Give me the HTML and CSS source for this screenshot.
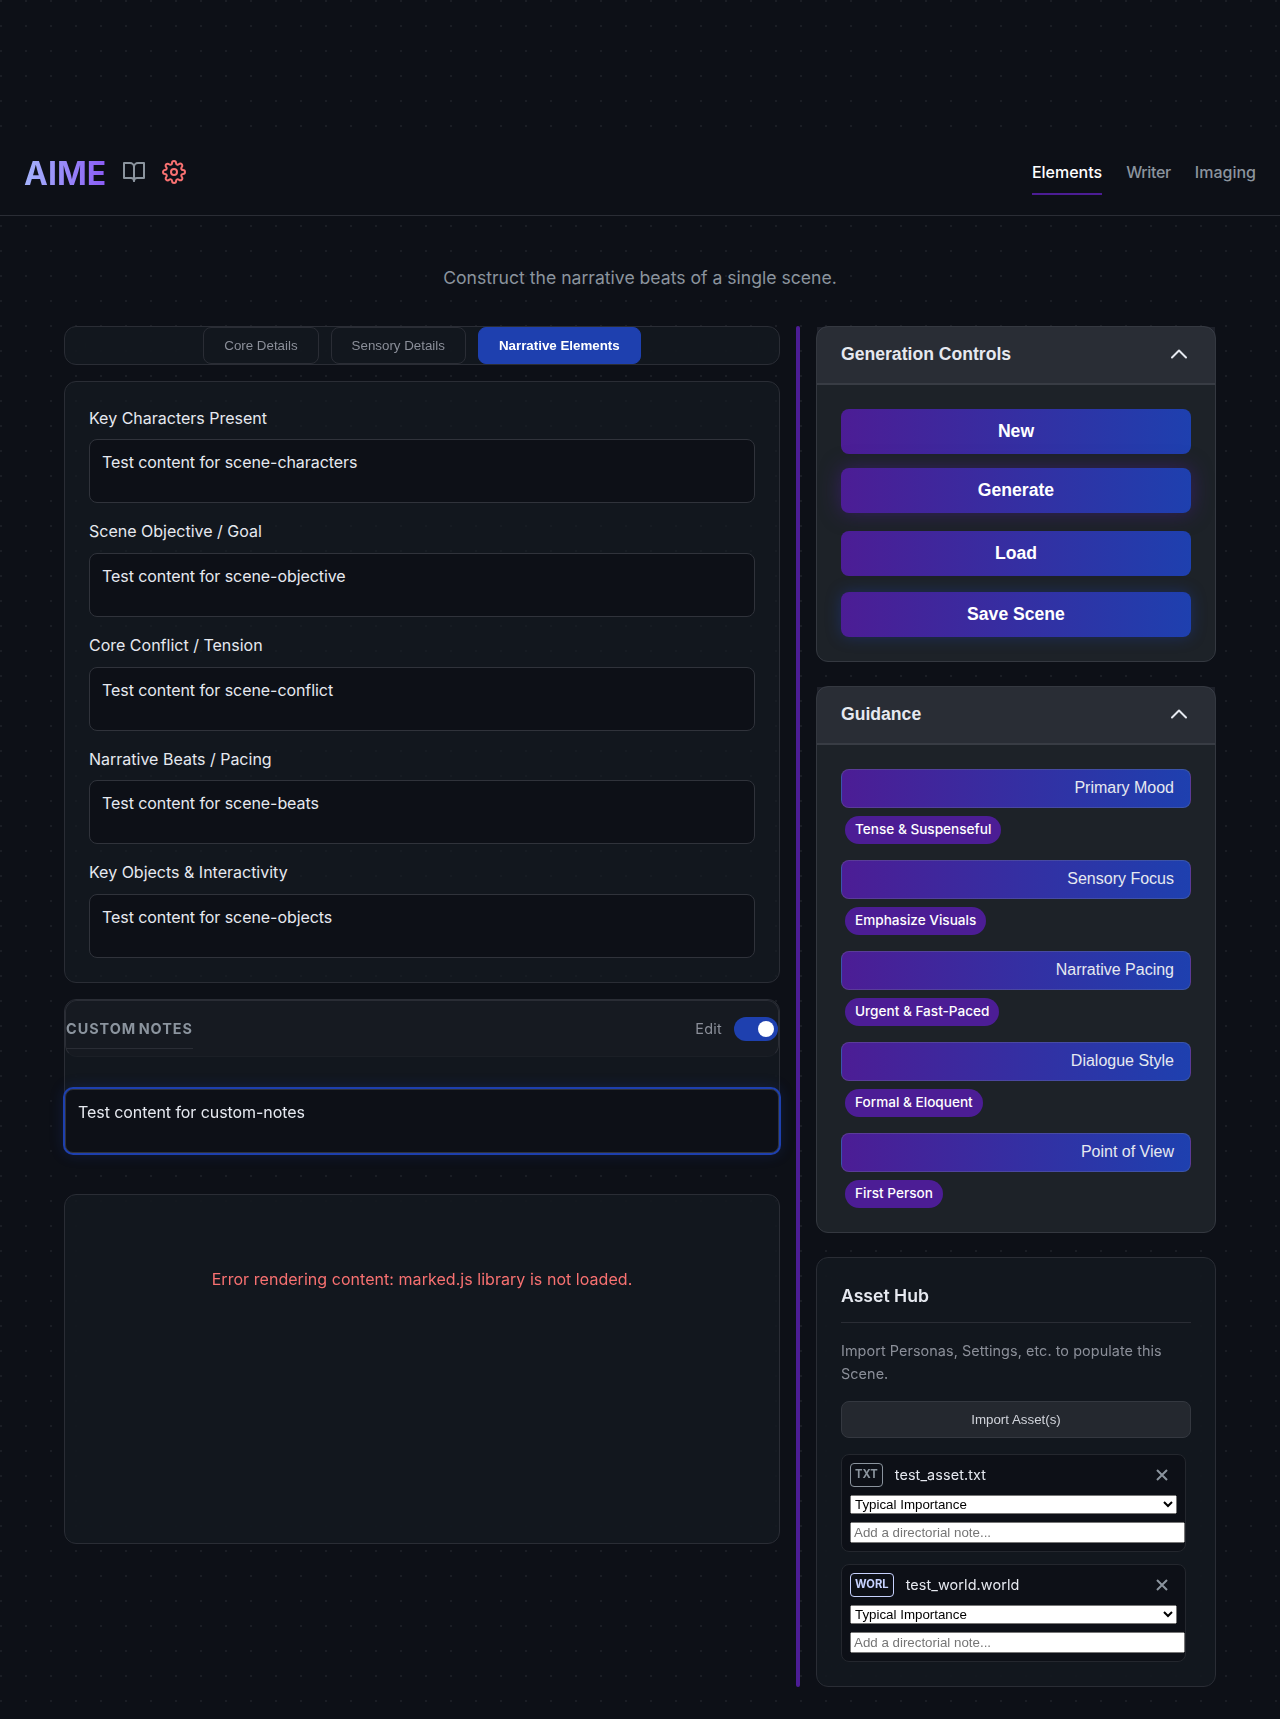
FILE: index.html
```html
<!DOCTYPE html>
<html lang="en">
<head>
<meta charset="utf-8">
<title>AIME</title>
<link rel="stylesheet" href="styles.css">
</head>
<body>
<header class="topbar">
  <div class="brand">
    <span class="logo">AIME</span>
    <svg class="icon book" viewBox="0 0 24 24"><path d="M2 3h6a4 4 0 0 1 4 4v14a3 3 0 0 0-3-3H2z"/><path d="M22 3h-6a4 4 0 0 0-4 4v14a3 3 0 0 1 3-3h7z"/></svg>
    <svg class="icon gear" viewBox="0 0 24 24"><circle cx="12" cy="12" r="3"/><path d="M19.4 15a1.65 1.65 0 0 0 .33 1.82l.06.06a2 2 0 0 1 0 2.83 2 2 0 0 1-2.83 0l-.06-.06a1.65 1.65 0 0 0-1.82-.33 1.65 1.65 0 0 0-1 1.51V21a2 2 0 0 1-2 2 2 2 0 0 1-2-2v-.09A1.65 1.65 0 0 0 9 19.4a1.65 1.65 0 0 0-1.82.33l-.06.06a2 2 0 0 1-2.83 0 2 2 0 0 1 0-2.83l.06-.06a1.65 1.65 0 0 0 .33-1.82 1.65 1.65 0 0 0-1.51-1H3a2 2 0 0 1-2-2 2 2 0 0 1 2-2h.09A1.65 1.65 0 0 0 4.6 9a1.65 1.65 0 0 0-.33-1.82l-.06-.06a2 2 0 0 1 0-2.83 2 2 0 0 1 2.83 0l.06.06a1.65 1.65 0 0 0 1.82.33H9a1.65 1.65 0 0 0 1-1.51V3a2 2 0 0 1 2-2 2 2 0 0 1 2 2v.09a1.65 1.65 0 0 0 1 1.51 1.65 1.65 0 0 0 1.82-.33l.06-.06a2 2 0 0 1 2.83 0 2 2 0 0 1 0 2.83l-.06.06a1.65 1.65 0 0 0-.33 1.82V9a1.65 1.65 0 0 0 1.51 1H21a2 2 0 0 1 2 2 2 2 0 0 1-2 2h-.09a1.65 1.65 0 0 0-1.51 1z"/></svg>
  </div>
  <nav class="nav">
    <a class="active">Elements</a>
    <a class="writer">Writer</a>
    <a>Imaging</a>
  </nav>
</header>
<p class="tagline">Construct the narrative beats of a single scene.</p>
<main class="layout">
  <section class="left">
    <div class="tabs panel">
      <button class="tab">Core Details</button>
      <button class="tab">Sensory Details</button>
      <button class="tab current">Narrative Elements</button>
    </div>
    <div class="form panel">
      <div class="field"><label>Key Characters Present</label><textarea rows="2">Test content for scene-characters</textarea></div>
      <div class="field"><label>Scene Objective / Goal</label><textarea rows="2">Test content for scene-objective</textarea></div>
      <div class="field"><label>Core Conflict / Tension</label><textarea rows="2">Test content for scene-conflict</textarea></div>
      <div class="field"><label>Narrative Beats / Pacing</label><textarea rows="2">Test content for scene-beats</textarea></div>
      <div class="field"><label>Key Objects &amp; Interactivity</label><textarea rows="2">Test content for scene-objects</textarea></div>
    </div>
    <div class="notes panel">
      <div class="notes-head">
        <h4>Custom Notes</h4>
        <div class="switch-row"><span>Edit</span><span class="switch"></span></div>
      </div>
      <textarea class="notes-text" rows="2">Test content for custom-notes</textarea>
    </div>
    <div class="output panel">Error rendering content: marked.js library is not loaded.</div>
  </section>
  <div class="divider"></div>
  <aside class="right">
    <section class="card">
      <div class="card-head"><h3>Generation Controls</h3><svg class="chev" viewBox="0 0 24 24"><path d="M5 15.5l7-7 7 7"/></svg></div>
      <div class="card-body actions">
        <button class="action">New</button>
        <button class="action generate">Generate</button>
        <button class="action load">Load</button>
        <button class="action save">Save Scene</button>
      </div>
    </section>
    <section class="card">
      <div class="card-head"><h3>Guidance</h3><svg class="chev" viewBox="0 0 24 24"><path d="M5 15.5l7-7 7 7"/></svg></div>
      <div class="card-body guides">
        <div class="guide"><button>Primary Mood</button><span class="chip">Tense &amp; Suspenseful</span></div>
        <div class="guide"><button>Sensory Focus</button><span class="chip">Emphasize Visuals</span></div>
        <div class="guide"><button>Narrative Pacing</button><span class="chip">Urgent &amp; Fast-Paced</span></div>
        <div class="guide"><button>Dialogue Style</button><span class="chip">Formal &amp; Eloquent</span></div>
        <div class="guide"><button>Point of View</button><span class="chip">First Person</span></div>
      </div>
    </section>
    <section class="assets panel">
      <h3>Asset Hub</h3>
      <p>Import Personas, Settings, etc. to populate this Scene.</p>
      <button class="import">Import Asset(s)</button>
      <div class="asset-list">
        <div class="asset">
          <div class="asset-head"><span class="badge">TXT</span><span class="name">test_asset.txt</span><svg class="close" viewBox="0 0 12 12"><path d="M1 1l10 10M11 1L1 11"/></svg></div>
          <select><option>Typical Importance</option></select>
          <input type="text" placeholder="Add a directorial note...">
        </div>
        <div class="asset">
          <div class="asset-head"><span class="badge world">WORL</span><span class="name">test_world.world</span><svg class="close" viewBox="0 0 12 12"><path d="M1 1l10 10M11 1L1 11"/></svg></div>
          <select><option>Typical Importance</option></select>
          <input type="text" placeholder="Add a directorial note...">
        </div>
      </div>
    </section>
  </aside>
</main>
</body>
</html>
```
FILE: styles.css
```css
* { box-sizing: border-box; }
body {
  margin: 0;
  padding-top: 129px;
  min-height: 1719px;
  background-color: #0d1017;
  background-image: radial-gradient(circle at 1px 1px, #1b1e25 1px, transparent 0);
  background-size: 25px 25px;
  color: #e6e9f0;
  font: 16px/1.6 Inter, sans-serif;
}
h3, h4, p { margin: 0; }
button { font-family: "Liberation Sans", Arial, sans-serif; }

.topbar {
  height: 87px;
  padding: 0 24px;
  display: flex;
  align-items: center;
  justify-content: space-between;
  background: #0d1017;
  border-bottom: 1px solid #2a2d35;
}
.brand { display: flex; align-items: center; gap: 16px; }
.logo {
  padding-top: 2px;
  font-size: 32px;
  font-weight: 700;
  line-height: 51px;
  background: linear-gradient(90deg, #a5b4fc, #8b5cf6);
  -webkit-background-clip: text;
  background-clip: text;
  color: transparent;
}
.icon { width: 24px; height: 24px; fill: none; stroke-width: 2; stroke-linecap: round; stroke-linejoin: round; }
.book { stroke: #8b949e; }
.gear { stroke: #f87171; }
.nav { display: flex; gap: 24px; padding-top: 2px; }
.nav a { padding: 9px 0 7px; border-bottom: 2px solid transparent; color: #8b949e; font-weight: 500; }
.nav a.active { color: #fff; border-color: #4c1d95; }
.nav a.writer { letter-spacing: -0.35px; }

.tagline { margin: 48px 0 34px; font-size: 17.6px; line-height: 28px; text-align: center; color: #8b949e; }
.layout { width: 1152px; margin: 0 auto; display: flex; gap: 16px; }
.left { width: 716px; }
.divider { width: 4px; border-radius: 2px; background: #4c1d95; }
.right { width: 400px; display: flex; flex-direction: column; gap: 24px; }

.panel { background: rgba(22, 27, 34, 0.7); border: 1px solid #2a2d35; border-radius: 12px; backdrop-filter: blur(12px); }
.tabs { height: 39px; display: flex; justify-content: center; gap: 12px; }
.tab { height: 37px; padding: 0 20px; border: 1px solid #2a2d35; border-radius: 8px; background: transparent; color: #8b8f99; font-size: 13.333px; }
.tab.current { background: #1e40af; border-color: #1e40af; color: #fff; font-weight: 700; }

.form { margin-top: 15.8px; padding: 24px; display: flex; flex-direction: column; gap: 16px; backdrop-filter: none; }
.field label { display: block; margin-bottom: 8px; }
textarea {
  display: block;
  width: 100%;
  height: 64px;
  padding: 12px;
  border: 1px solid #30333b;
  border-radius: 8px;
  background: #0d1017;
  color: #e6e9f0;
  font: 16px/normal Inter, sans-serif;
  letter-spacing: -0.07px;
  resize: none;
  overflow: hidden;
}
.notes { height: 155px; margin-top: 16.2px; }
.notes-head {
  height: 57px;
  padding-top: 1px;
  display: flex;
  align-items: center;
  justify-content: space-between;
  border: 1px solid #2a2d35;
  border-bottom-color: #1b1f26;
  border-radius: 12px;
  background: #161a21;
}
.notes h4 { padding-bottom: 8px; margin-top: 9px; border-bottom: 1px solid #2a2d35; color: #8b949e; font-size: 14.4px; font-weight: 700; letter-spacing: 1px; word-spacing: -2px; text-transform: uppercase; }
.switch-row { display: flex; align-items: center; gap: 12px; font-size: 14.4px; letter-spacing: 0.25px; color: #8b8f99; }
.switch { width: 44px; height: 24px; padding: 4px; border-radius: 12px; background: #1e40af; }
.switch::before { content: ""; display: block; width: 16px; height: 16px; margin-left: 20px; border-radius: 50%; background: #fff; }
.notes-text { margin-top: 32px; box-shadow: 0 0 0 2px #1e40af, 0 0 15px rgba(30, 64, 175, 0.3); }
.output { height: 350px; margin-top: 40px; padding-top: 72px; text-align: center; letter-spacing: 0.045px; color: #f87171; }

.card { border: 1px solid #343840; border-radius: 12px; background: #1d2228; }
.card-head { height: 58px; padding: 0 24px 2px; display: flex; align-items: center; justify-content: space-between; background: rgba(70, 73, 85, 0.3); border-bottom: 2px solid #383c44; }
.card-head h3 { font: 700 17.6px/1.6 "Liberation Sans", Arial, sans-serif; }
.chev { width: 24px; height: 24px; fill: none; stroke: #e6e9f0; stroke-width: 2; stroke-linecap: round; stroke-linejoin: round; }
.card-body { padding: 24px; }
.actions { display: flex; flex-direction: column; }
.action { height: 45px; border: 0; border-radius: 8px; background: linear-gradient(90deg, #4c1d95, #1e40af); color: #fff; font-size: 17.6px; font-weight: 700; }
.generate { margin: 14px 0 18px; box-shadow: 0 0 20px rgba(76, 29, 149, 0.5); }
.save { margin-top: 16px; box-shadow: 0 0 15px rgba(30, 64, 175, 0.4); }
.guides { display: flex; flex-direction: column; gap: 16px; }
.guide { display: flex; flex-direction: column; gap: 8px; }
.guide button { height: 39px; padding: 0 16px 2px; border: 1px solid rgba(139, 148, 158, 0.25); border-radius: 8px; background: linear-gradient(90deg, #4c1d95, #1e40af); color: #e6e9f0; font-size: 16px; text-align: right; }
.chip { align-self: flex-start; height: 28px; margin-left: 4px; padding: 0 10px; border-radius: 14px; background: #4c1d95; color: #fff; font-size: 13.6px; font-weight: 500; line-height: 27px; }

.assets { height: 430px; padding: 24px; }
.assets h3 { height: 41px; font-size: 17.6px; font-weight: 600; line-height: 28px; border-bottom: 1px solid #2a2d35; }
.assets p { margin: 16px 0 16px; font-size: 14.4px; line-height: 23px; letter-spacing: 0.07px; color: #8b8f99; }
.import { display: block; width: 100%; height: 37px; border: 1px solid #343840; border-radius: 8px; background: #24282f; color: #d0d3da; font-size: 13.333px; }
.asset-list { width: 345px; margin-top: 16px; display: flex; flex-direction: column; gap: 12px; }
.asset { height: 98px; padding: 8px; border: 1px solid #24272e; border-radius: 8px; background: #0d1017; }
.asset-head { height: 24px; display: flex; align-items: center; gap: 12px; }
.badge { height: 24px; padding: 0 4px; border: 1px solid #8b949e; border-radius: 4px; color: #8b949e; font-size: 11.2px; font-weight: 700; line-height: 21px; }
.badge.world { border-color: #c7d2fe; color: #c7d2fe; }
.name { flex: 1; font-size: 14.4px; letter-spacing: 0.1px; }
.close { width: 12px; height: 12px; margin-right: 9px; stroke: #8b949e; stroke-width: 2; fill: none; }
.asset select, .asset input { display: block; font: 13.333px "Liberation Sans", Arial, sans-serif; }
.asset select { width: 327px; height: 19px; margin: 8px 0; }
.asset input { width: 335px; height: 21px; }
```
